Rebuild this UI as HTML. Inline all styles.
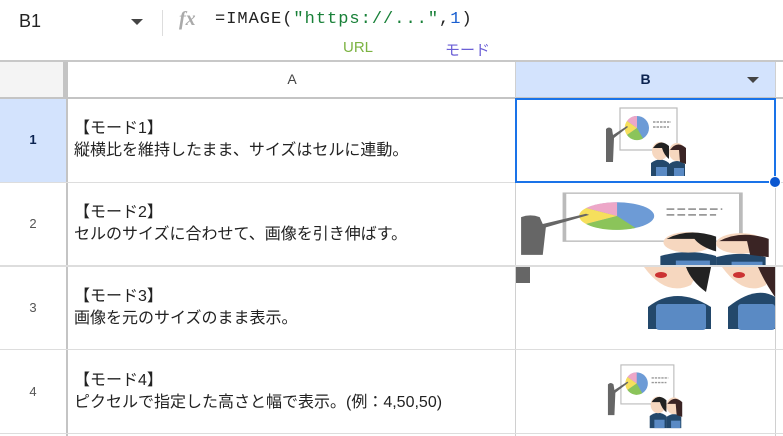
<!DOCTYPE html>
<html><head><meta charset="utf-8"><style>
*{margin:0;padding:0;box-sizing:border-box}
body{width:783px;height:436px;overflow:hidden;background:#fff;font-family:"Liberation Sans","Noto Sans CJK JP",sans-serif;position:relative}
.a{position:absolute}
.t{font-size:16px;color:#222;line-height:22px}
.rn{font-size:13px;color:#555;text-align:center;width:66px}
</style></head><body>
<svg width="0" height="0" style="position:absolute"><defs>
<symbol id="il" viewBox="0 0 84 70">
<rect x="15" y="1" width="57" height="42" fill="#fff" stroke="#bbb" stroke-width="1.2"/>
<circle cx="32" cy="21" r="12" fill="#6d9bd6"/>
<path d="M32 21 L32 9 A12 12 0 0 0 22 14 Z" fill="#eda7c8"/>
<path d="M32 21 L22 14 A12 12 0 0 0 22 28 Z" fill="#f6df5c"/>
<path d="M32 21 L22 28 A12 12 0 0 0 38 31.5 Z" fill="#8bc45a"/>
<g stroke="#999" stroke-width="1.5"><line x1="48" y1="15" x2="66" y2="15" stroke-dasharray="2.5 1"/><line x1="48" y1="20" x2="64" y2="20" stroke-dasharray="2.5 1"/></g>
<path d="M1 22 Q4 19 7 22 L8 28 L22 19 L23 20 L9 31 L8 55 L1 55 Z" fill="#666"/>
<path d="M46 56 Q55 49 64 56 L64 69 L46 69 Z" fill="#23486b"/>
<path d="M64 57 Q72 51 80 57 L80 69 L64 69 Z" fill="#23486b"/>
<rect x="51" y="60" width="11" height="9" fill="#5a8ac4"/><rect x="69" y="61" width="10" height="8" fill="#5a8ac4"/>
<ellipse cx="55" cy="44" rx="8" ry="9" fill="#f6d7bf"/><path d="M48 41 Q55 31 64 39 L64 52 Q59 48 57 41 Z" fill="#222"/>
<ellipse cx="72" cy="45" rx="8" ry="9" fill="#f6d7bf"/><path d="M65 43 Q72 33 81 41 L81 57 L75 55 L74 43 Z" fill="#3a2424"/>
</symbol></defs></svg>

<!-- formula bar -->
<div class="a" style="left:19px;top:11px;font-size:18px;color:#222">B1</div>
<div class="a" style="left:131px;top:19px;border-left:6px solid transparent;border-right:6px solid transparent;border-top:6px solid #444"></div>
<div class="a" style="left:162px;top:10px;width:1px;height:26px;background:#ddd"></div>
<div class="a" style="left:179px;top:8px;font-family:'Liberation Serif',serif;font-style:italic;font-size:20px;color:#aaa;font-weight:bold">fx</div>
<div class="a" style="left:215px;top:10px;font-family:'Liberation Mono',monospace;font-size:17px;color:#222;letter-spacing:1px">=IMAGE(<span style="color:#188038">"https://..."</span>,<span style="color:#1a5fd0">1</span>)</div>
<div class="a" style="left:343px;top:39px;font-size:15px;color:#7cb342">URL</div>
<div class="a" style="left:445px;top:39px;font-size:15px;color:#6b5fd6">モード</div>

<!-- header row -->
<div class="a" style="left:0;top:60px;width:783px;height:2px;background:#c8c8c8"></div>
<div class="a" style="left:0;top:62px;width:63px;height:35px;background:#f4f4f4"></div>
<div class="a" style="left:63px;top:62px;width:5px;height:35px;background:#c4c4c4"></div>
<div class="a" style="left:66px;top:97px;width:2px;height:339px;background:#c4c4c4"></div>
<div class="a" style="left:0;top:97px;width:783px;height:2px;background:#c4c4c4"></div>
<div class="a" style="left:68px;top:62px;width:448px;height:35px;text-align:center;font-size:14px;color:#444;line-height:35px">A</div>
<div class="a" style="left:516px;top:62px;width:259px;height:35px;background:#d3e3fd;text-align:center;font-size:14px;font-weight:bold;color:#0b2350;line-height:35px">B</div>
<div class="a" style="left:747px;top:77px;border-left:6px solid transparent;border-right:6px solid transparent;border-top:6px solid #444"></div>
<div class="a" style="left:515px;top:62px;width:1px;height:374px;background:#d0d0d0"></div>
<div class="a" style="left:775px;top:62px;width:1px;height:374px;background:#d0d0d0"></div>

<!-- row headers -->
<div class="a" style="left:0;top:99px;width:66px;height:83px;background:#d3e3fd"></div>
<div class="a rn" style="left:0;top:132px;color:#0b2350;font-weight:bold">1</div>
<div class="a rn" style="left:0;top:216px">2</div>
<div class="a rn" style="left:0;top:300px">3</div>
<div class="a rn" style="left:0;top:384px">4</div>
<div class="a" style="left:0;top:182px;width:783px;height:1px;background:#ddd"></div>
<div class="a" style="left:0;top:265px;width:783px;height:2px;background:#ddd"></div>
<div class="a" style="left:0;top:349px;width:783px;height:1px;background:#ddd"></div>
<div class="a" style="left:0;top:433px;width:783px;height:1px;background:#ddd"></div>

<!-- text -->
<div class="a t" style="left:74px;top:118px">【モード1】<br>縦横比を維持したまま、サイズはセルに連動。</div>
<div class="a t" style="left:74px;top:202px">【モード2】<br>セルのサイズに合わせて、画像を引き伸ばす。</div>
<div class="a t" style="left:74px;top:286px">【モード3】<br>画像を元のサイズのまま表示。</div>
<div class="a t" style="left:74px;top:370px">【モード4】<br>ピクセルで指定した高さと幅で表示。(例：4,50,50)</div>

<!-- images -->
<svg class="a" style="left:605px;top:107px" width="84" height="70"><use href="#il"/></svg>
<div class="a" style="left:516px;top:183px;width:259px;height:82px;overflow:hidden">
<svg class="a" style="left:2px;top:9px" width="260" height="80" viewBox="0 0 84 70" preserveAspectRatio="none"><use href="#il" width="84" height="70"/></svg></div>
<div class="a" style="left:516px;top:267px;width:259px;height:82px;overflow:hidden">
<svg class="a" style="left:0;top:0" width="259" height="82">
<rect x="0" y="0" width="14" height="16" fill="#666"/>
<path d="M128 0 Q150 30 175 18 L185 0Z" fill="#f6d7bf"/><path d="M160 0 L195 0 L190 25 Q175 14 170 0Z" fill="#222"/>
<ellipse cx="145" cy="8" rx="6" ry="3" fill="#c33"/>
<path d="M132 40 Q160 18 195 40 L195 62 L132 62 Z" fill="#23486b"/>
<rect x="140" y="37" width="50" height="26" rx="3" fill="#5a8ac4"/>
<path d="M206 0 Q228 30 250 18 L255 0Z" fill="#f6d7bf"/><path d="M238 0 L259 0 L259 30 Q248 14 242 0Z" fill="#3a2424"/>
<ellipse cx="223" cy="8" rx="6" ry="3" fill="#c33"/>
<path d="M212 40 Q240 18 259 30 L259 62 L212 62 Z" fill="#23486b"/>
<rect x="222" y="37" width="37" height="26" rx="3" fill="#5a8ac4"/>
</svg></div>
<svg class="a" style="left:607px;top:364px" width="78" height="65" viewBox="0 0 84 70"><use href="#il"/></svg>

<!-- selection -->
<div class="a" style="left:515px;top:98px;width:261px;height:85px;border:2px solid #1a73e8"></div>
<div class="a" style="left:769px;top:176px;width:12px;height:12px;border-radius:50%;background:#0b57d0;border:1px solid #fff"></div>
</body></html>
